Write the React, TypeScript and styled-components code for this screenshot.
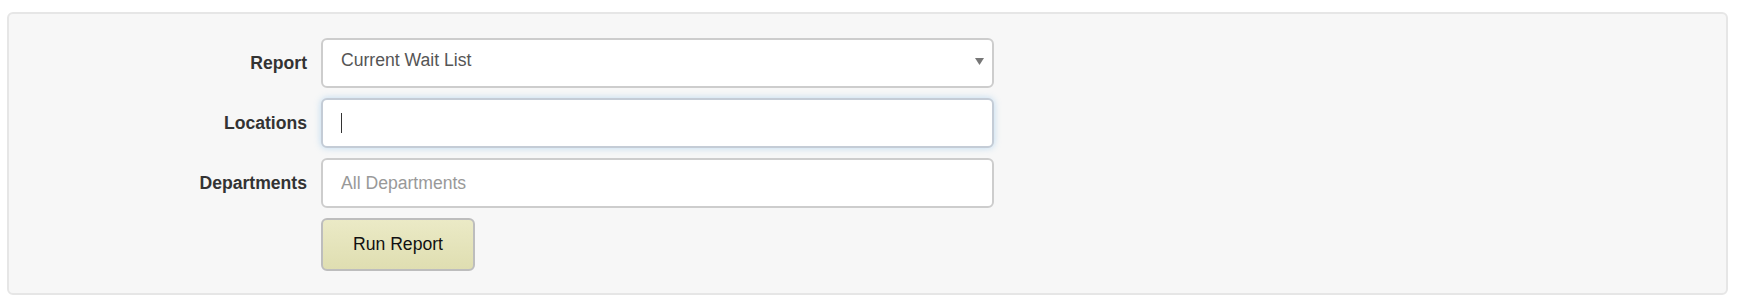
import { FC, useState } from 'react';
import styled, { createGlobalStyle } from 'styled-components';

const GlobalStyle = createGlobalStyle`
  html, body {
    margin: 0;
    padding: 0;
    background: #ffffff;
  }

  body {
    font-family: 'Liberation Sans', Arial, sans-serif;
    font-size: 17.6px;
    color: #333333;
  }
`;

export const Well = styled.section`
  box-sizing: border-box;
  width: 1721px;
  height: 283px;
  margin: 12px 0 0 7px;
  padding: 24px 0 0 0;
  background: #f7f7f7;
  border: 2px solid #e6e6e6;
  border-radius: 6px;
`;

export const Form = styled.form`
  display: grid;
  grid-template-columns: 298px 673px;
  column-gap: 14px;
  row-gap: 10px;
  align-items: center;
`;

export const Label = styled.label`
  text-align: right;
  font-weight: 700;
  font-size: 17.6px;
  color: #333333;
`;

export const Field = styled.div`
  position: relative;
  height: 50px;
`;

const fieldBase = `
  box-sizing: border-box;
  width: 100%;
  height: 50px;
  margin: 0;
  padding: 0 18px;
  font-family: 'Liberation Sans', Arial, sans-serif;
  font-size: 17.6px;
  color: #555555;
  background: #ffffff;
  border: 2px solid #cdcdcd;
  border-radius: 6px;
  outline: none;
`;

export const Select = styled.select`
  ${fieldBase}
  appearance: none;
  padding-bottom: 7px;
  cursor: pointer;
`;

export const Arrow = styled.svg`
  position: absolute;
  right: 10px;
  top: 20px;
  width: 9px;
  height: 7px;
  pointer-events: none;
`;

export const TextInput = styled.input<{ $focused?: boolean }>`
  ${fieldBase}
  caret-color: transparent;
  border-color: ${(p) => (p.$focused ? '#c4ccd6' : '#cdcdcd')};
  box-shadow: ${(p) => (p.$focused ? '0 0 7px rgba(102, 175, 233, 0.4)' : 'none')};

  &::placeholder {
    color: #999999;
  }
`;

export const Caret = styled.span`
  position: absolute;
  left: 20px;
  top: 15px;
  width: 1px;
  height: 20px;
  background: #333333;
  pointer-events: none;
`;

export const RunButton = styled.button`
  grid-column: 2;
  justify-self: start;
  box-sizing: border-box;
  width: 154px;
  height: 53px;
  padding: 0;
  font-family: 'Liberation Sans', Arial, sans-serif;
  font-size: 17.6px;
  color: #111111;
  background: linear-gradient(to bottom, #ebeac6 0%, #dfdeb1 100%);
  border: 2px solid #bdbdbd;
  border-radius: 6px;
  cursor: pointer;
`;

const App: FC = () => {
  const [report, setReport] = useState('current');
  const [location, setLocation] = useState('');
  const [department, setDepartment] = useState('');

  return (
    <>
      <GlobalStyle />
      <Well>
        <Form onSubmit={(e) => e.preventDefault()}>
          <Label htmlFor='report'>Report</Label>
          <Field>
            <Select id='report' value={report} onChange={(e) => setReport(e.target.value)}>
              <option value='current'>Current Wait List</option>
              <option value='history'>Wait List History</option>
            </Select>
            <Arrow viewBox='0 0 9 7'>
              <path d='M0 0 H9 L4.5 7 Z' fill='#777777' />
            </Arrow>
          </Field>

          <Label htmlFor='locations'>Locations</Label>
          <Field>
            <TextInput
              id='locations'
              type='text'
              $focused
              value={location}
              onChange={(e) => setLocation(e.target.value)}
            />
            {location === '' && <Caret />}
          </Field>

          <Label htmlFor='departments'>Departments</Label>
          <Field>
            <TextInput
              id='departments'
              type='text'
              placeholder='All Departments'
              value={department}
              onChange={(e) => setDepartment(e.target.value)}
            />
          </Field>

          <RunButton type='submit'>Run Report</RunButton>
        </Form>
      </Well>
    </>
  );
};

export default App;
